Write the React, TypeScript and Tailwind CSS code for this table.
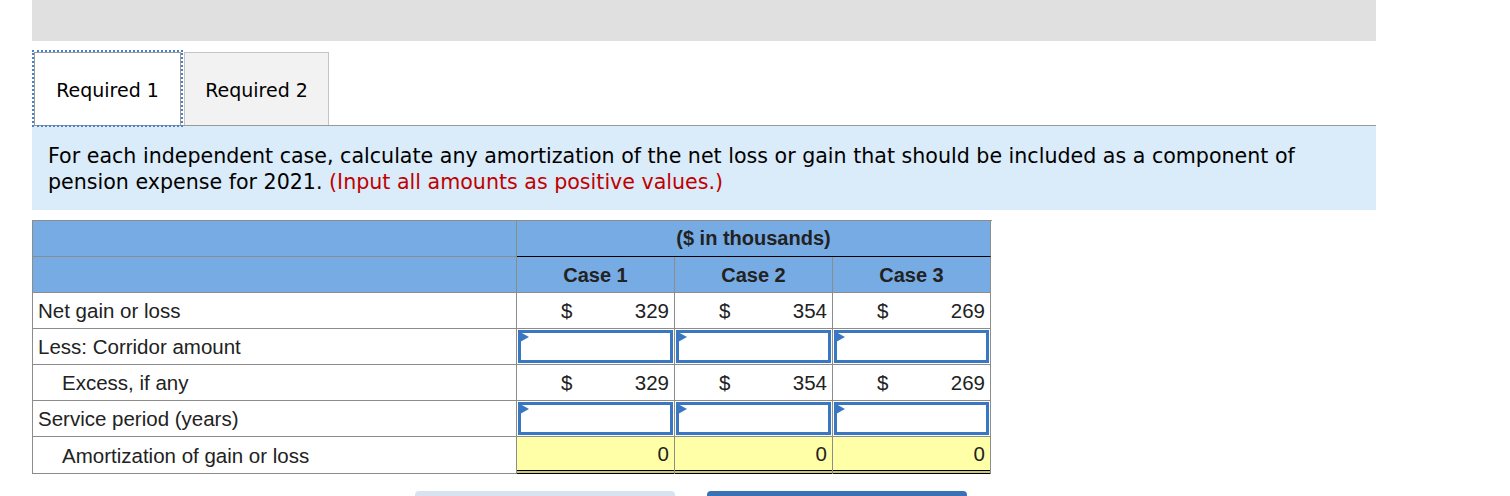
import React from "react";

const sans = { fontFamily: '"DejaVu Sans", Verdana, sans-serif' };
const arial = { fontFamily: '"Liberation Sans", Arial, sans-serif' };

function MoneyCell({ v }: { v: string }) {
  return (
    <div className="flex h-[36px] items-center justify-between border-r border-b border-[#8c8c8c] bg-white pl-[44px] pr-[5px] pt-[2px] text-[20.5px] text-[#222]">
      <span>$</span>
      <span>{v}</span>
    </div>
  );
}

function InputCell() {
  return (
    <div className="h-[36px] border-r border-b border-[#8c8c8c] bg-white p-px">
      <div className="relative h-full w-full border-[3px] border-[#3a77c2] bg-white">
        <svg className="absolute -left-[1px] -top-[1px]" width="9" height="10" viewBox="0 0 9 10">
          <polygon points="0,0 9,5 0,10" fill="#3a77c2" />
        </svg>
      </div>
    </div>
  );
}

function YellowCell() {
  return (
    <div className="flex h-[37px] flex-col border-r border-[#8c8c8c] bg-[#ffffa8]">
      <div className="flex flex-1 items-center justify-end pr-[5px] pt-[2px] text-[20.5px] text-[#222]">0</div>
      <div className="h-px bg-black" />
      <div className="h-[2px] bg-[#c9c57a]" />
      <div className="h-px bg-black" />
    </div>
  );
}

function Label({ text, indent, last }: { text: string; indent?: boolean; last?: boolean }) {
  return (
    <div
      className={`flex ${last ? "h-[37px]" : "h-[36px]"} items-center border-r border-b border-[#8c8c8c] bg-white pt-[2px] text-[20.5px] text-[#222] ${
        indent ? "pl-[29px]" : "pl-[5px]"
      }`}
    >
      {text}
    </div>
  );
}

export default function App() {
  return (
    <div className="h-[496px] w-[1510px] overflow-hidden bg-white">
      <div className="ml-[32px] w-[1344px]">
        <div className="h-[41px] bg-[#e0e0e0]" />
        <div className="mt-[9px] flex items-end" style={sans}>
          <div className="border-2 border-dotted border-[#4a80c8]">
            <div className="flex h-[73px] w-[147px] items-center justify-center border border-b-0 border-[#9a9a9a] bg-white pt-[3px] text-[19px] text-black">
              Required 1
            </div>
          </div>
          <div className="ml-[1px] mb-[2px] flex h-[73px] w-[145px] items-center justify-center border border-b-0 border-[#c4c4c4] bg-[#f2f2f2] pt-[3px] text-[19px] text-black">
            Required 2
          </div>
        </div>
        <div className="-mt-[2px] h-[85px] border-t border-[#999] bg-[#daebf9] px-[16px] pt-[17px]" style={sans}>
          <p className="text-[20.6px] leading-[26px] text-black">
            For each independent case, calculate any amortization of the net loss or gain that should be included as a component of
            <br />
            pension expense for 2021.{" "}
            <span className="text-[#c00000]">(Input all amounts as positive values.)</span>
          </p>
        </div>

        <div
          className="mt-[10px] grid w-[960px] grid-cols-[484px_158px_158px_158px] border-t border-l border-[#8c8c8c]"
          style={arial}
        >
          <div className="h-[36px] border-r border-b border-[#8c8c8c] bg-[#77abe4]" />
          <div className="col-span-3 flex h-[36px] items-center justify-center border-r border-b border-r-[#8c8c8c] border-b-black bg-[#77abe4] pb-[2px] text-[20px] font-bold text-[#222]">
            ($ in thousands)
          </div>

          <div className="h-[36px] border-r border-b border-[#8c8c8c] bg-[#77abe4]" />
          {["Case 1", "Case 2", "Case 3"].map((c) => (
            <div
              key={c}
              className="flex h-[36px] items-center justify-center border-r border-b border-[#8c8c8c] bg-[#77abe4] text-[20px] font-bold text-[#222]"
            >
              {c}
            </div>
          ))}

          <Label text="Net gain or loss" />
          <MoneyCell v="329" />
          <MoneyCell v="354" />
          <MoneyCell v="269" />

          <Label text="Less: Corridor amount" />
          <InputCell />
          <InputCell />
          <InputCell />

          <Label text="Excess, if any" indent />
          <MoneyCell v="329" />
          <MoneyCell v="354" />
          <MoneyCell v="269" />

          <Label text="Service period (years)" />
          <InputCell />
          <InputCell />
          <InputCell />

          <Label text="Amortization of gain or loss" indent last />
          <YellowCell />
          <YellowCell />
          <YellowCell />
        </div>

        <div className="ml-[383px] mt-[17px] flex gap-[32px]">
          <div className="h-[40px] w-[260px] rounded-t-[4px] bg-[#d8e3f0]" />
          <div className="h-[40px] w-[260px] rounded-t-[4px] bg-[#3a72b6]" />
        </div>
      </div>
    </div>
  );
}
